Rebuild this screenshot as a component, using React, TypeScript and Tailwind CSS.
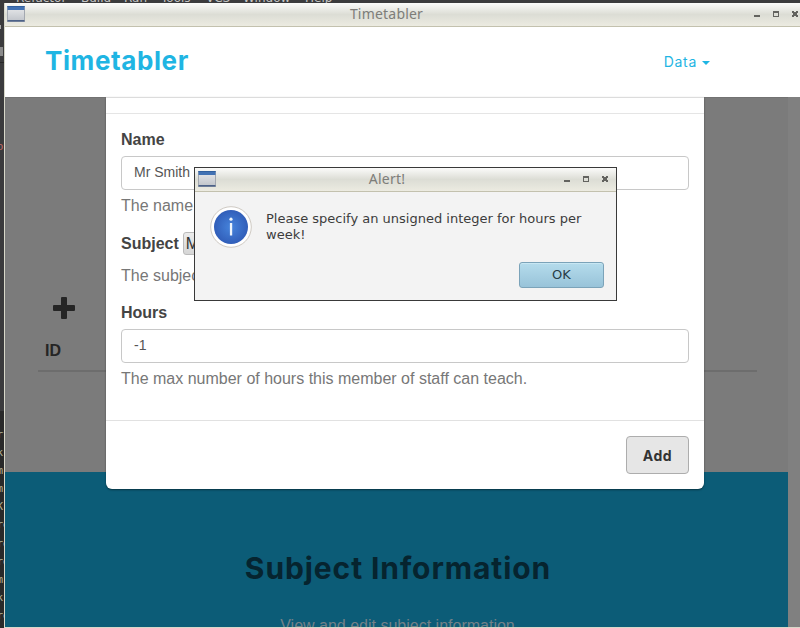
import type { ReactNode } from "react";

const menuItems: { label: string; gap: string }[] = [
  { label: "Refactor", gap: "w-[65px]" },
  { label: "Build", gap: "w-[43px]" },
  { label: "Run", gap: "w-[37px]" },
  { label: "Tools", gap: "w-[45px]" },
  { label: "VCS", gap: "w-[37px]" },
  { label: "Window", gap: "w-[62px]" },
  { label: "Help", gap: "w-[40px]" },
];

const gutterLines = ["rf", "k)", "m", "m", "K", "re", "re", "re", "m", "k)", "re", "K"];

function WindowIcon() {
  return (
    <svg width="18" height="16" viewBox="0 0 18 16" className="-mt-px shrink-0">
      <defs>
        <linearGradient id="paper" x1="0" y1="0" x2="0" y2="1">
          <stop offset="0" stopColor="#e9eaec" />
          <stop offset="1" stopColor="#bfc3c9" />
        </linearGradient>
      </defs>
      <rect x="0.5" y="0.5" width="17" height="15" fill="url(#paper)" stroke="#a3a8b0" />
      <rect x="0.5" y="0" width="17" height="4" fill="#4272b4" />
      <rect x="0.5" y="0" width="17" height="1" fill="#31609f" />
      <rect x="0.5" y="14" width="17" height="1.6" fill="#4d6288" />
    </svg>
  );
}

function WindowControls() {
  return (
    <svg width="46" height="10" viewBox="0 0 46 10" shapeRendering="crispEdges" className="-mt-px shrink-0">
      <rect x="0" y="6" width="6" height="2" fill="#63635f" />
      <path d="M19 2h6v6h-6z M20 4v3h4V4z" fill="#63635f" fillRule="evenodd" />
      <path
        d="M38 2h2v1h2V2h2v2h-1v2h1v2h-2V7h-2v1h-2V6h1V4h-1z"
        fill="#63635f"
      />
    </svg>
  );
}

function TitleBar({ title, className }: { title: string; className: string }) {
  return (
    <div
      className={`grid shrink-0 items-center border-b border-[#c3c1ae] bg-linear-to-b from-[#fbfbfa] via-[#dcddd5] to-[#ecebe1] font-['Noto_Sans',sans-serif] text-[14px] text-[#7d7d79] ${className}`}
    >
      <WindowIcon />
      <span className="-mt-[2px] pr-[6px] text-center leading-none tracking-[0.2px]">{title}</span>
      <WindowControls />
    </div>
  );
}

function Label({ children }: { children: ReactNode }) {
  return <label className="text-[16px] leading-[23px] font-bold text-[#444]">{children}</label>;
}

function Field({ value }: { value: string }) {
  return (
    <div className="flex h-[34px] items-center rounded-[4px] border border-[#c8c8c8] bg-white px-3 pb-px text-[14px] text-[#555]">
      {value}
    </div>
  );
}

function Header() {
  return (
    <header className="flex h-[70px] shrink-0 items-center justify-between bg-white pr-[90px] pl-[40px] font-['Inter',sans-serif] text-[#1fb5e3]">
      <span className="pb-[2px] text-[26px] leading-none font-bold tracking-[0.6px]">Timetabler</span>
      <span className="flex items-center gap-[5px] text-[14px] leading-none tracking-[0.7px]">
        Data
        <svg width="8" height="4" viewBox="0 0 8 4" className="mt-px">
          <path d="M0 0h8L4 4z" fill="currentColor" />
        </svg>
      </span>
    </header>
  );
}

function StaffModal() {
  return (
    <section className="absolute top-0 left-[101px] flex h-[392px] w-[598px] flex-col rounded-b-[6px] border-t border-[#dcdcdc] bg-white text-[#777] shadow-[0_1px_2px_0_rgba(0,0,0,0.45)]">
      <div className="h-[16px] shrink-0 border-b border-[#e5e5e5]" />
      <div className="flex h-[307px] shrink-0 flex-col border-b border-[#e1e1e1] px-[15px] pt-[14px]">
        <Label>Name</Label>
        <div className="mt-[5px]">
          <Field value="Mr Smith" />
        </div>
        <p className="mt-[4px] text-[16px] leading-[23px]">The name</p>
        <div className="mt-[15px] flex h-[23px] items-center gap-[4px]">
          <Label>Subject</Label>
          <span className="flex h-[23px] items-center rounded-[3px] border border-[#bbb] bg-linear-to-b from-[#ececec] to-[#d6d6d6] px-[2px] text-[16px] text-[#333]">
            M
          </span>
        </div>
        <p className="mt-[9px] text-[16px] leading-[23px]">The subjec</p>
        <div className="mt-[14px] flex">
          <Label>Hours</Label>
        </div>
        <div className="mt-[5px]">
          <Field value="-1" />
        </div>
        <p className="mt-[4px] text-[16px] leading-[23px]">
          The max number of hours this member of staff can teach.
        </p>
      </div>
      <div className="flex flex-1 items-start justify-end px-[15px] pt-[15px]">
        <button className="h-[38px] w-[63px] rounded-[4px] border border-[#adadad] bg-[#e6e6e6] font-['Inter',sans-serif] text-[14px] font-bold tracking-[0.5px] text-[#333]">
          Add
        </button>
      </div>
    </section>
  );
}

function AlertDialog() {
  return (
    <div className="absolute top-[167px] left-[194px] flex h-[134px] w-[423px] flex-col border border-[#393939] bg-[#f3f3f3] font-['DejaVu_Sans',sans-serif] text-[13px] text-[#3c3c3c]">
      <TitleBar title="Alert!" className="h-[24px] grid-cols-[18px_1fr_46px] pr-[6px] pl-[3px]" />
      <div className="flex pt-[14px] pl-[15px]">
        <svg width="42" height="42" viewBox="0 0 42 42" className="shrink-0">
          <defs>
            <radialGradient id="info">
              <stop offset="0" stopColor="#4684dc" />
              <stop offset="1" stopColor="#315eb9" />
            </radialGradient>
          </defs>
          <circle cx="21" cy="21" r="20.3" fill="#fff" stroke="#cfcac3" />
          <circle cx="21" cy="21" r="17" fill="url(#info)" />
          <circle cx="21" cy="13.2" r="1.6" fill="#eef5fb" />
          <path d="M19.9 17h2.3v12.5h-2.3z" fill="#eef5fb" />
        </svg>
        <p className="w-[330px] pt-[5px] pl-[14px] leading-[16px]">
          Please specify an unsigned integer for hours per week!
        </p>
      </div>
      <div className="flex flex-1 items-end justify-end pr-[12px] pb-[12px]">
        <button className="h-[26px] w-[85px] rounded-[3px] border border-[#7ba3b9] bg-linear-to-b from-[#b5dcec] to-[#98c3d9] text-[13px] text-[#283d48] shadow-[inset_0_1px_0_#c8e7f3]">
          OK
        </button>
      </div>
    </div>
  );
}

export default function App() {
  return (
    <div className="relative flex h-[628px] w-[800px] flex-col overflow-hidden bg-[#3b3b3d] font-['Liberation_Sans',Arial,sans-serif]">
      <div className="flex h-[3px] shrink-0 items-end overflow-hidden pl-[16px] font-['DejaVu_Sans',sans-serif] text-[12px] leading-[10px] text-[#c5c5c5]">
        {menuItems.map((item) => (
          <span key={item.label} className={`shrink-0 ${item.gap}`}>
            {item.label}
          </span>
        ))}
      </div>
      <div className="flex min-h-0 flex-1">
        <aside className="flex w-[4px] shrink-0 flex-col overflow-hidden">
          <div className="mt-[22px] h-[4px] w-px shrink-0 bg-[#aaa]" />
          <div className="mt-[18px] h-[9px] w-[3px] shrink-0 bg-[#8b8b8b]" />
          <div className="mt-[6px] h-px shrink-0 bg-[#272727]" />
          <div className="mt-[76px] h-[14px] shrink-0 text-[11px] leading-[14px] text-[#c26b6b]">
            <span className="-ml-[3px]">o</span>
          </div>
          <div className="mt-[258px] flex flex-1 flex-col bg-[#292929] pt-[15px] font-['DejaVu_Sans_Mono',monospace] text-[10px] leading-[18.1px] text-[#b7b59a]">
            {gutterLines.map((line, i) => (
              <span key={i} className="-ml-[3px] block h-[18.1px] shrink-0">
                {line}
              </span>
            ))}
          </div>
        </aside>
        <main className="flex min-w-0 flex-1 flex-col border-b border-l border-[#d8d8c9] bg-white">
          <TitleBar title="Timetabler" className="h-[24px] grid-cols-[18px_1fr_46px] pr-0 pl-[2px]" />
          <Header />
          <div className="relative flex min-h-0 flex-1 flex-col bg-[#808080]">
            <div className="flex h-[375px] w-[783px] shrink-0 flex-col border-t border-[#727272] bg-[#7b7b7b] pl-[33px] text-[#252525]">
              <svg width="22" height="22" viewBox="0 0 22 22" className="mt-[199px] ml-[15px] shrink-0">
                <path
                  d="M9 0h4q1 0 1 1v7h7q1 0 1 1v4q0 1-1 1h-7v7q0 1-1 1H9q-1 0-1-1v-7H1q-1 0-1-1V9q0-1 1-1h7V1q0-1 1-1z"
                  fill="currentColor"
                />
              </svg>
              <div className="mt-[19px] h-[34px] w-[719px] border-b-2 border-[#6d6d6d] pl-[7px] text-[16px] leading-[26px] font-bold">
                ID
              </div>
            </div>
            <div className="flex w-[783px] flex-1 flex-col items-center overflow-hidden bg-[#0c5c77] pt-[76px]">
              <h2 className="pl-[3px] font-['Inter',sans-serif] text-[30px] leading-[40px] font-bold tracking-[0.9px] whitespace-nowrap text-[#06242f]">
                Subject Information
              </h2>
              <p className="mt-[26px] pl-[2px] text-[16px] leading-[23px] whitespace-nowrap text-[#748187]">
                View and edit subject information
              </p>
            </div>
            <StaffModal />
          </div>
        </main>
      </div>
      <AlertDialog />
    </div>
  );
}
